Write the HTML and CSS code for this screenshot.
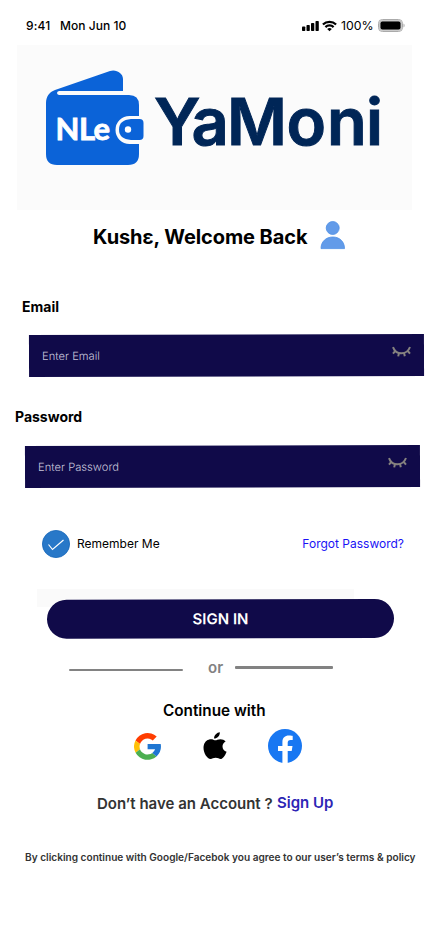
FILE: index.html
```html
<!DOCTYPE html>
<html lang="en">
<head>
<meta charset="utf-8">
<meta name="viewport" content="width=device-width, initial-scale=1">
<title>YaMoni – Sign in</title>
<link rel="stylesheet" href="styles.css">
</head>
<body>
<main class="screen">
  <header class="status">
    <span class="time">9:41</span>
    <span class="date">Mon Jun 10</span>
    <svg class="signal" width="18" height="12" viewBox="0 0 18 12"><rect x="0" y="6.5" width="3.300" height="4.5" rx=".8"/><rect x="4.5" y="5" width="3.300" height="6" rx=".8"/><rect x="9" y="3" width="3.300" height="8" rx=".8"/><rect x="13.5" y="1" width="3.300" height="10" rx=".8"/></svg>
    <svg class="wifi" width="15" height="12" viewBox="0 0 15 12"><g fill="none" stroke="#000" stroke-width="2.200"><path d="M.9 4.5a9.4 9.4 0 0 1 13.2 0"/><path d="M3.4 7.1a5.8 5.8 0 0 1 8.2 0"/></g><path d="M5.2 9a3.3 3.3 0 0 1 4.6 0L7.5 11.3z"/></svg>
    <span class="percent">100%</span>
    <svg class="battery" width="27" height="13" viewBox="0 0 27 13"><rect x=".5" y=".5" width="24" height="12" rx="3.8" fill="#fff" stroke="#aaa"/><rect x="1.2" y="1.2" width="22.6" height="10.6" rx="3" fill="#bbb"/><rect x="2.5" y="2.5" width="20" height="8" rx="2"/><path d="M25.5 4.5c1.5.6 1.5 3.400 0 4z" fill="#aaa"/></svg>
  </header>

  <section class="brand">
    <svg width="395" height="165" viewBox="17 45 395 165">
      <path d="M46 103c0-6 3-11 9-13l55-19c6-2 13 2 13 8v12H59q-2 .4-2 2t2 2h70q10 0 10 10v11h-9.500a14 14 0 0 0 0 28H139v10q0 11-11 11H57q-11 0-11-11z" fill="#0b63d8"/>
      <path d="M131 119h8.500q4 0 4 4v13q0 4-4 4H131q-12-1-12-10.500T131 119z" fill="#0b63d8"/>
      <circle cx="128" cy="129.500" r="3.200" fill="#fff"/>
      <text class="wallet-text" x="55.500 79 93.500" y="139.500">NLe</text>
      <text class="wordmark" x="154 191.500 227 286.500 327 366" y="145">YaMoni</text>
    </svg>
  </section>

  <div class="welcome">
    <h1>Kushɛ, Welcome Back</h1>
    <svg width="26" height="30" viewBox="0 0 26 30"><g fill="#629be9" stroke="#4c8ee5" stroke-width=".8"><circle cx="12.700" cy="8" r="6.500"/><path d="M1 28.600c0-7 5-11.600 11.800-11.600s11.700 4.600 11.700 11.600z"/></g></svg>
  </div>

  <form class="login">
    <label class="label-email">Email</label>
    <div class="field field-email">
      <span>Enter Email</span>
      <svg width="19" height="18" viewBox="0 0 19 18"><path d="M1 1c3 8.300 14 8.300 17 0M3.500 4.500l-2.500 3M15.500 4.500l2.500 3M7 6.800l-.8 3.500M12 6.800l.8 3.500" fill="none" stroke="#85827f" stroke-width="2"/></svg>
    </div>
    <label class="label-password">Password</label>
    <div class="field field-password">
      <span>Enter Password</span>
      <svg width="19" height="18" viewBox="0 0 19 18"><path d="M1 1c3 8.300 14 8.300 17 0M3.500 4.500l-2.500 3M15.500 4.500l2.500 3M7 6.800l-.8 3.500M12 6.800l.8 3.500" fill="none" stroke="#85827f" stroke-width="2"/></svg>
    </div>
    <div class="options">
      <svg width="28" height="28" viewBox="0 0 28 28"><circle cx="14" cy="14" r="13.600" fill="#2878c8" stroke="#1566b9" stroke-width=".8"/><path d="M6.500 14.500l4 5L21.500 10" fill="none" stroke="#fff" stroke-width="1.200"/></svg>
      <span>Remember Me</span>
      <a class="forgot">Forgot Password?</a>
    </div>
    <div class="submit">
      <button type="button">SIGN IN</button>
    </div>
  </form>

  <div class="divider"><i class="rule rule-left"></i><span>or</span><i class="rule rule-right"></i></div>

  <h2>Continue with</h2>
  <div class="providers">
    <svg width="27" height="27" viewBox="0 0 27 27"><path d="M1.500 7.500A13.500 13.500 0 0 1 22.700 3.600l-3.900 3.900A8 8 0 0 0 6 10.900z" fill="#ff3d00"/><path d="M1.500 7.500a13.500 13.500 0 0 0 .1 12.300L6 16.200a8 8 0 0 1 0-5.300z" fill="#ffc107"/><path d="M1.600 19.800a13.500 13.500 0 0 0 20.900 3.600l-4.200-3.500A8 8 0 0 1 6 16.200z" fill="#4caf50"/><path d="M13.600 10.900h13.100a13.500 13.500 0 0 1-4.200 12.500l-4.200-3.500a8 8 0 0 0 2.800-3.700h-7.500z" fill="#1f76d2"/></svg>
    <svg class="apple" width="24" height="28" viewBox="0 0 24 28"><path d="M16.800.3c.3 3.100-2.500 6.400-5.700 6.300C10.800 3.500 13.900.5 16.800.3zM22.600 9.500c-4.800 3-3.600 8.600 1 10.300-1 2.700-3.300 6.900-5.600 7.200-2 .1-2.800-1.200-5.300-1.200s-3.300 1.200-5.200 1.200C3.800 27-.7 19.300.8 13.300 2 8.200 7 6.300 10.400 7.800c1.700.7 2.400.7 4 0 2.900-1.300 6.300-.7 8.200 1.700z"/></svg>
    <svg class="facebook" width="34" height="34" viewBox="0 0 34 34"><circle cx="17" cy="17" r="17" fill="#1877f2"/><path d="M14.400 34V22H10v-5h4.400v-3.800c0-4.300 2.500-6.600 6.500-6.600 1.800 0 3.800.3 3.800.3v4.200h-2.100c-2.100 0-2.900 1.300-2.900 2.700V17h4.800l-.8 5h-4v12q-2.700.2-5.300 0z" fill="#fff"/></svg>
  </div>

  <p class="signup"><span>Don’t have an Account ?</span><a>Sign Up</a></p>
  <p class="terms">By clicking continue with Google/Facebok you agree to our user’s terms &amp; policy</p>
</main>
</body>
</html>
```
FILE: styles.css
```css
* { box-sizing: border-box; }
body { margin: 0; background: #fff; overflow: hidden; }
.screen {
  width: 430px; height: 932px; overflow: hidden;
  font-family: Inter, "Liberation Sans", sans-serif;
  color: #000; white-space: nowrap;
}
svg { display: block; flex: none; }
h1, h2, p { margin: 0; }

.status { display: flex; align-items: center; height: 45px; padding: 6px 0 0 26px; font-size: 12px; font-weight: 500; }
.time { width: 34px; letter-spacing: .2px; }
.date { width: 242px; letter-spacing: .05px; }
.wifi { margin-left: 2px; }
.percent { width: 37px; margin-left: 4px; font-size: 12.300px; font-weight: 400; }

.brand { width: 395px; height: 165px; margin-left: 17px; background: #fbfbfb; }
.wallet-text { font: 700 31px Lato, sans-serif; fill: #fff; stroke: #fff; stroke-width: .8px; }
.wordmark { font: 600 65px Inter, sans-serif; fill: #002657; stroke: #002657; stroke-width: 1px; }

.welcome { display: flex; align-items: center; height: 30px; margin: 10px 0 0 93px; }
.welcome svg { margin-left: 12px; }
h1 { width: 215px; font-size: 20px; line-height: 30px; font-weight: 700; padding-top: 3px; letter-spacing: -.08px; }

.login label { display: block; font-size: 14px; line-height: 20px; font-weight: 700; }
.label-email { margin: 47px 0 0 22px; }
.label-password { margin: 31px 0 0 15px; }
.field {
  display: flex; justify-content: space-between; align-items: center;
  width: 395px; height: 42px; padding: 1px 13px;
  background: #100a49; color: #c9c7dc; font-size: 11.200px; font-weight: 300;
  transform: translateY(.5px) rotate(-.15deg);
}
.field-email { margin: 16.500px 0 0 29px; }
.field-password { margin: 18.500px 0 0 25px; }
.options { display: flex; align-items: center; height: 28px; margin: 43px 26px 0 42px; font-size: 12px; }
.options span { margin-left: 7px; position: relative; top: -1px; }
.forgot { margin-left: auto; color: #1a12f5; position: relative; top: -1px; }
.submit { width: 317px; height: 18px; margin: 31px 0 0 37px; background: #fafafa; }
button {
  display: block; width: 347px; height: 39px; margin: 0 0 0 10px; padding: 0;
  border: 0; border-radius: 20px; background: #100a49; color: #fff;
  font: 600 15px Inter, sans-serif; transform: translateY(10.300px) rotate(-.15deg);
}

.divider { display: flex; align-items: center; height: 20px; margin: 50px 0 0 69px; color: #828282; font-size: 15px; font-weight: 600; }
.divider span { width: 27px; margin-left: 25px; }
.rule { height: 2.500px; background: #828282; border-radius: 1px; }
.rule-left { width: 114px; margin-top: 6px; }
.rule-right { width: 98px; margin-top: 1px; }
h2 { margin: 24px 0 0 163px; font-size: 15.300px; line-height: 20px; font-weight: 600; }
.providers { display: flex; align-items: center; height: 34px; margin: 8px 0 0 134px; }
.apple { margin-left: 42px; }
.facebook { margin-left: 41px; }
.signup { display: flex; height: 20px; margin: 31px 0 0 97px; font-size: 15px; line-height: 20px; font-weight: 600; color: #333; }
.signup span { width: 180px; }
.signup a { color: #2d25b5; margin-top: -1px; }
.terms { margin: 33px 0 0 25px; font-size: 10.100px; line-height: 20px; font-weight: 600; color: #333; }
```
